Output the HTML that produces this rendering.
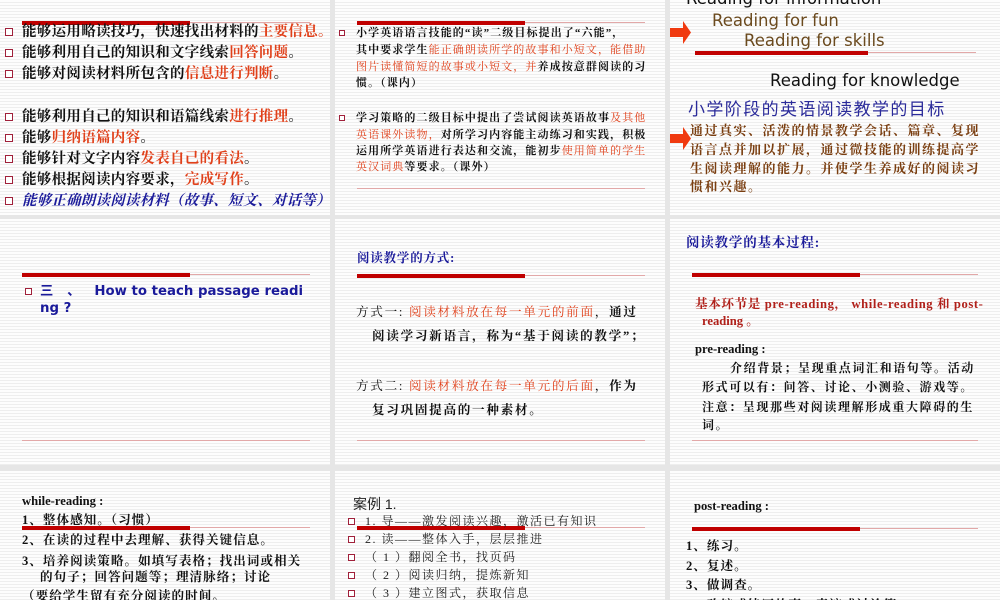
<!DOCTYPE html>
<html><head><meta charset="utf-8"><style>
html,body{margin:0;width:1000px;height:600px;overflow:hidden}
body{background:#e6e6e6;position:relative;font-family:"Liberation Serif","Noto Serif CJK SC",serif;}
.s{position:absolute;background:#fbfbfb;background-image:repeating-linear-gradient(to bottom,#fdfdfd 0,#fdfdfd 2px,#eeeeee 2px,#eeeeee 3px);overflow:hidden}
.t{position:absolute;white-space:nowrap;line-height:1}
.bar{position:absolute;height:4px;background:#c00000}
.ln{position:absolute;height:1px;background:#e2a8a8}
.b{position:absolute;width:6px;height:6px;border:1px solid #a0203a;background:#fff}
.r{color:#e0401a}
.bl{color:#1a1a9a}
.bold{font-weight:bold}
</style></head><body>
<div class="s" style="left:0;top:0;width:330px;height:215px"></div>
<div class="s" style="left:335px;top:0;width:330px;height:215px"></div>
<div class="s" style="left:670px;top:0;width:330px;height:215px"></div>
<div class="s" style="left:0;top:219px;width:330px;height:246px"></div>
<div class="s" style="left:335px;top:219px;width:330px;height:246px"></div>
<div class="s" style="left:670px;top:219px;width:330px;height:246px"></div>
<div class="s" style="left:0;top:471px;width:330px;height:129px"></div>
<div class="s" style="left:335px;top:471px;width:330px;height:129px"></div>
<div class="s" style="left:670px;top:471px;width:330px;height:129px"></div>

<!-- slide 1 -->
<div class="bar" style="left:22px;top:21px;width:168px"></div>
<div class="ln" style="left:190px;top:22px;width:120px"></div>
<div style="font-size:14.5px;font-weight:bold;color:#111;letter-spacing:0.3px">
<div class="b" style="left:5px;top:28px"></div><div class="t" style="left:22px;top:25px">能够运用略读技巧，快速找出材料的<span class="r">主要信息。</span></div>
<div class="b" style="left:5px;top:49px"></div><div class="t" style="left:22px;top:46px">能够利用自己的知识和文字线索<span class="r">回答问题</span>。</div>
<div class="b" style="left:5px;top:70px"></div><div class="t" style="left:22px;top:67px">能够对阅读材料所包含的<span class="r">信息进行判断</span>。</div>
<div class="b" style="left:5px;top:113px"></div><div class="t" style="left:22px;top:110px">能够利用自己的知识和语篇线索<span class="r">进行推理</span>。</div>
<div class="b" style="left:5px;top:134px"></div><div class="t" style="left:22px;top:131px">能够<span class="r">归纳语篇内容</span>。</div>
<div class="b" style="left:5px;top:155px"></div><div class="t" style="left:22px;top:152px">能够针对文字内容<span class="r">发表自己的看法</span>。</div>
<div class="b" style="left:5px;top:176px"></div><div class="t" style="left:22px;top:173px">能够根据阅读内容要求，<span class="r">完成写作</span>。</div>
<div class="b" style="left:5px;top:197px"></div><div class="t bl" style="left:22px;top:194px;font-style:italic;letter-spacing:0.2px">能够正确朗读阅读材料（故事、短文、对话等）</div>
</div>

<!-- slide 2 -->
<div class="bar" style="left:357px;top:21px;width:168px"></div>
<div class="ln" style="left:525px;top:22px;width:120px"></div>
<div style="font-size:11px;font-weight:bold;color:#111;letter-spacing:1.1px">
<div class="b" style="left:339px;top:30px;width:4px;height:4px"></div>
<div class="t" style="left:356px;top:28px">小学英语语言技能的“读”二级目标提出了“六能”，</div>
<div class="t" style="left:356px;top:45px">其中要求学生<span class="r" style="font-weight:normal">能正确朗读所学的故事和小短文，能借助</span></div>
<div class="t r" style="left:356px;top:62px;font-weight:normal">图片读懂简短的故事或小短文，并<span style="color:#111;font-weight:bold">养成按意群阅读的习</span></div>
<div class="t" style="left:356px;top:78px">惯。（课内）</div>
<div class="b" style="left:339px;top:115px;width:4px;height:4px"></div>
<div class="t" style="left:356px;top:113px">学习策略的二级目标中提出了尝试阅读英语故事<span class="r" style="font-weight:normal">及其他</span></div>
<div class="t r" style="left:356px;top:130px;font-weight:normal">英语课外读物，<span style="color:#111;font-weight:bold">对所学习内容能主动练习和实践，积极</span></div>
<div class="t" style="left:356px;top:146px">运用所学英语进行表达和交流，能初步<span class="r" style="font-weight:normal">使用简单的学生</span></div>
<div class="t" style="left:356px;top:162px"><span class="r" style="font-weight:normal">英汉词典</span>等要求。（课外）</div>
</div>
<div class="ln" style="left:357px;top:188px;width:288px"></div>

<!-- slide 3 -->
<div style="font-family:'DejaVu Sans','Liberation Sans',sans-serif;font-size:16.5px">
<div class="t" style="left:686px;top:-9px;color:#111">Reading for information</div>
<div class="t" style="left:712px;top:13px;color:#6b4a1e">Reading for fun</div>
<div class="t" style="left:744px;top:33px;color:#6b4a1e">Reading for skills</div>
<div class="t" style="left:770px;top:73px;color:#111">Reading for knowledge</div>
</div>
<div class="bar" style="left:695px;top:51px;width:173px"></div>
<div class="ln" style="left:868px;top:52px;width:108px"></div>
<svg style="position:absolute;left:670px;top:21px" width="21" height="23"><path d="M0 7H13V0L21 11.5L13 23V16H0Z" fill="#f03a10"/></svg>
<svg style="position:absolute;left:670px;top:127px" width="21" height="23"><path d="M0 7H13V0L21 11.5L13 23V16H0Z" fill="#f03a10"/></svg>
<div class="t" style="left:688px;top:99px;font-size:17px;color:#2b2b9a;font-family:'Noto Sans CJK SC',sans-serif;letter-spacing:1.4px">小学阶段的英语阅读教学的目标</div>
<div style="font-size:13px;font-weight:bold;color:#7a3e10;letter-spacing:1.5px">
<div class="t" style="left:690px;top:124px">通过真实、活泼的情景教学会话、篇章、复现</div>
<div class="t" style="left:690px;top:143px">语言点并加以扩展，通过微技能的训练提高学</div>
<div class="t" style="left:690px;top:162px">生阅读理解的能力。并使学生养成好的阅读习</div>
<div class="t" style="left:690px;top:180px">惯和兴趣。</div>
</div>

<!-- slide 4 -->
<div class="bar" style="left:22px;top:273px;width:168px"></div>
<div class="ln" style="left:190px;top:274px;width:120px"></div>
<div class="b" style="left:25px;top:288px;width:5px;height:5px"></div>
<div class="t bl bold" style="left:40px;top:285px;font-size:13.3px;font-family:'DejaVu Sans','Noto Sans CJK SC',sans-serif">三&nbsp;&nbsp;&nbsp;、&nbsp;&nbsp;&nbsp;How to teach passage readi</div>
<div class="t bl bold" style="left:40px;top:302px;font-size:13.3px;font-family:'DejaVu Sans',sans-serif">ng ?</div>
<div class="ln" style="left:22px;top:440px;width:288px"></div>

<!-- slide 5 -->
<div class="t bl bold" style="left:357px;top:252px;font-size:12.5px;letter-spacing:0.8px">阅读教学的方式:</div>
<div class="bar" style="left:357px;top:274px;width:168px"></div>
<div class="ln" style="left:525px;top:275px;width:120px"></div>
<div style="font-size:12.6px;color:#111;letter-spacing:1.7px">
<div class="t" style="left:356px;top:306px">方式一: <span class="r">阅读材料放在每一单元的前面</span>，<b>通过</b></div>
<div class="t bold" style="left:372px;top:330px">阅读学习新语言，称为“基于阅读的教学”；</div>
<div class="t" style="left:356px;top:380px">方式二: <span class="r">阅读材料放在每一单元的后面</span>，<b>作为</b></div>
<div class="t bold" style="left:372px;top:404px">复习巩固提高的一种素材。</div>
</div>
<div class="ln" style="left:357px;top:440px;width:288px"></div>

<!-- slide 6 -->
<div class="t bl bold" style="left:686px;top:236px;font-size:13.5px;letter-spacing:0.8px">阅读教学的基本过程:</div>
<div class="bar" style="left:692px;top:273px;width:168px"></div>
<div class="ln" style="left:860px;top:274px;width:118px"></div>
<div class="t bold" style="left:695px;top:298px;font-size:12.6px;color:#b0201a;letter-spacing:0.6px">基本环节是 pre-reading， while-reading 和 post-</div>
<div class="t bold" style="left:702px;top:315px;font-size:12.6px;color:#b0201a">reading 。</div>
<div class="t bold" style="left:695px;top:343px;font-size:12.6px;color:#111">pre-reading :</div>
<div style="font-size:12px;color:#111;font-weight:bold;letter-spacing:1.6px">
<div class="t" style="left:730px;top:362px">介绍背景；呈现重点词汇和语句等。活动</div>
<div class="t" style="left:702px;top:381px">形式可以有：问答、讨论、小测验、游戏等。</div>
<div class="t" style="left:702px;top:401px">注意：呈现那些对阅读理解形成重大障碍的生</div>
<div class="t" style="left:702px;top:419px">词。</div>
</div>
<div class="ln" style="left:692px;top:440px;width:286px"></div>

<!-- slide 7 -->
<div class="bar" style="left:22px;top:526px;width:168px"></div>
<div class="ln" style="left:190px;top:527px;width:120px"></div>
<div class="t bold" style="left:22px;top:495px;font-size:12.6px;color:#111">while-reading :</div>
<div style="font-size:12.6px;color:#111;font-weight:bold;letter-spacing:1px">
<div class="t" style="left:22px;top:514px">1、整体感知。（习惯）</div>
<div class="t" style="left:22px;top:534px">2、在读的过程中去理解、获得关键信息。</div>
<div class="t" style="left:22px;top:555px">3、培养阅读策略。如填写表格；找出词或相关</div>
<div class="t" style="left:40px;top:571px">的句子；回答问题等；理清脉络；讨论</div>
<div class="t" style="left:22px;top:590px">（要给学生留有充分阅读的时间。</div>
</div>

<!-- slide 8 -->
<div class="t" style="left:353px;top:497px;font-size:14px;font-family:'Liberation Sans','Noto Sans CJK SC',sans-serif;color:#222">案例 1.</div>
<div class="bar" style="left:357px;top:526px;width:168px"></div>
<div class="ln" style="left:525px;top:527px;width:120px"></div>
<div style="font-size:12px;color:#222;letter-spacing:1.5px">
<div class="b" style="left:348px;top:518px;width:5px;height:5px"></div><div class="t" style="left:365px;top:515px">1. 导——激发阅读兴趣，激活已有知识</div>
<div class="b" style="left:348px;top:536px;width:5px;height:5px"></div><div class="t" style="left:365px;top:533px">2. 读——整体入手，层层推进</div>
<div class="b" style="left:348px;top:554px;width:5px;height:5px"></div><div class="t" style="left:365px;top:551px">（ 1 ）翻阅全书，找页码</div>
<div class="b" style="left:348px;top:572px;width:5px;height:5px"></div><div class="t" style="left:365px;top:569px">（ 2 ）阅读归纳，提炼新知</div>
<div class="b" style="left:348px;top:590px;width:5px;height:5px"></div><div class="t" style="left:365px;top:587px">（ 3 ）建立图式，获取信息</div>
</div>

<!-- slide 9 -->
<div class="t bold" style="left:694px;top:500px;font-size:12.6px;color:#111">post-reading :</div>
<div class="bar" style="left:692px;top:527px;width:168px"></div>
<div class="ln" style="left:860px;top:528px;width:118px"></div>
<div style="font-size:12.6px;color:#111;font-weight:bold;letter-spacing:1px">
<div class="t" style="left:686px;top:540px">1、练习。</div>
<div class="t" style="left:686px;top:560px">2、复述。</div>
<div class="t" style="left:686px;top:579px">3、做调查。</div>
<div class="t" style="left:686px;top:599px">4、改编或续写故事，表演或讨论等。</div>
</div>
</body></html>
